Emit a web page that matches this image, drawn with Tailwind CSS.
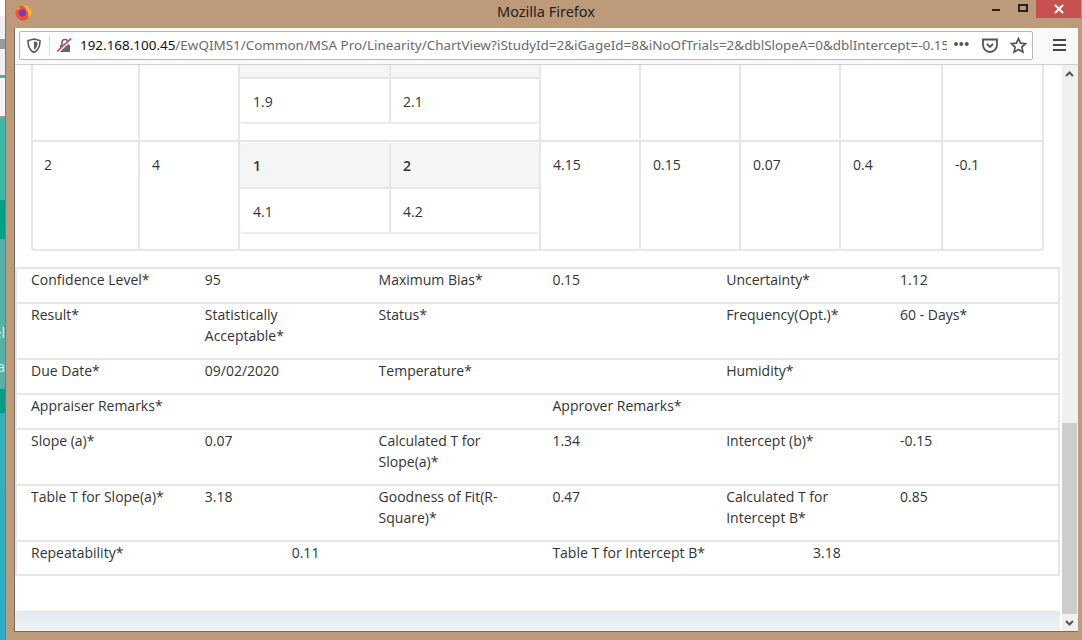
<!DOCTYPE html>
<html lang="en">
<head>
  <meta charset="UTF-8" />
  <title>Mozilla Firefox</title>
  <script src="https://cdn.jsdelivr.net/npm/@tailwindcss/browser@4"></script>
</head>
<body class="w-[1082px] h-[640px] overflow-hidden flex bg-[#bd9a7a] font-['Open_Sans',sans-serif] text-[14px] text-[#333]">
  <!-- desktop peeking out on the left -->
  <div class="w-[5px] h-full flex flex-col shrink-0 overflow-hidden">
    <div class="h-[16px] bg-white"></div>
    <div class="h-[23px] bg-[#f0f0f0]"></div>
    <div class="h-[10px] bg-[#9a9a9a]"></div>
    <div class="h-[26px] bg-[#f0f0f0]"></div>
    <div class="h-[3px] bg-[#3cb8a8]"></div>
    <div class="h-[38px] bg-[#f4f4f4]"></div>
    <div class="h-[2px] bg-[#9a9a9a]"></div>
    <div class="h-[82px] bg-[#3cb8a8]"></div>
    <div class="h-[39px] bg-[#00a08a]"></div>
    <div class="h-[150px] bg-[#55b0ac] flex flex-col items-end text-[#d8f2f0] leading-[34px] pt-[77px] whitespace-nowrap">
      <span>el</span>
      <span>a</span>
    </div>
    <div class="h-[24px] bg-[#009e8a]"></div>
    <div class="h-[227px] bg-linear-to-b from-[#36b0b8] to-[#2aaec8]"></div>
  </div>

  <!-- window -->
  <div class="w-[1077px] h-full flex flex-col border-l border-[#8f7560]">
    <!-- title bar -->
    <div class="h-[28px] shrink-0 relative flex items-center justify-center text-[#222] text-[14.500px] font-['Noto_Sans',sans-serif]">
      <span class="ml-[4px] mt-[-5px]">Mozilla Firefox</span>
      <svg class="absolute left-[9px] top-[4px]" width="17" height="17" viewBox="0 0 17 17">
        <circle cx="8" cy="9" r="7.500" fill="#f2503c"/>
        <path d="M7 .8c5 .3 9.500 3 9.500 8 0 2.500-1.200 4.600-3 6 .8-5-2-10.500-6.500-14z" fill="#ffb42e"/>
        <path d="M1 6c1-2 2-3 3-3.500L5 5z" fill="#ff9a30"/>
        <circle cx="7.500" cy="9" r="3.600" fill="#6a3fc4"/>
      </svg>
      <div class="absolute right-[1px] top-0 flex items-start">
        <div class="w-[26px] h-[18px] relative"><div class="absolute left-[8px] top-[9px] w-[8px] h-[2px] bg-[#222]"></div></div>
        <div class="w-[26px] h-[18px] relative"><div class="absolute left-[8px] top-[4px] w-[10px] h-[8px] border-2 border-[#222]"></div></div>
        <div class="w-[45px] h-[18px] bg-[#c75050] flex items-center justify-center">
          <svg width="10" height="10" viewBox="0 0 10 10"><path d="M1 1l8 8M9 1l-8 8" stroke="#fff" stroke-width="2"/></svg>
        </div>
      </div>
    </div>

    <div class="flex-1 flex flex-col ml-[8px] mr-[4px] mb-[8px] border-l border-b border-[#7a6a5c] overflow-hidden">
      <!-- toolbar -->
      <div class="h-[37px] shrink-0 bg-[#f9f9fa] border-b border-[#cfcfcf] flex items-center pl-[4px] pb-[2px]">
        <div class="w-[1014px] h-[29px] bg-white border border-[#b8b8b8] rounded-[2px] flex items-center text-[#6b6b6b]">
          <svg class="ml-[7px]" width="14" height="15" viewBox="0 0 14 15"><path d="M7 1l6 1.500c0 6-1.500 10-6 12-4.500-2-6-6-6-12z" fill="none" stroke="#5a5a5a" stroke-width="1.600"/><path d="M7 3.500l3.500.8c0 3.500-1 6-3.500 7.500z" fill="#5a5a5a"/></svg>
          <div class="w-px h-[19px] bg-[#dcdcdc] ml-[8px]"></div>
          <svg class="ml-[7px]" width="15" height="15" viewBox="0 0 15 15"><path d="M3 7h10v7H3z" fill="#666"/><path d="M5 7V4.500a3 3 0 0 1 6 0V7" fill="none" stroke="#666" stroke-width="1.600"/><path d="M0 14.500L14 1.500" stroke="#fff" stroke-width="3"/><path d="M0 13.500L14 .5" stroke="#ed2655" stroke-width="1.500"/></svg>
          <div class="ml-[8px] mt-px w-[867px] overflow-hidden whitespace-nowrap text-[13.450px] font-['Noto_Sans',sans-serif]"><span class="text-[#111]">192.168.100.45</span>/EwQIMS1/Common/MSA Pro/Linearity/ChartView?iStudyId=2&amp;iGageId=8&amp;iNoOfTrials=2&amp;dblSlopeA=0&amp;dblIntercept=-0.15</div>
          <span class="ml-[6px] w-[17px] text-center text-[#555] text-[13px] font-bold tracking-[0.5px] whitespace-nowrap">•••</span>
          <svg class="ml-[12px]" width="16" height="15" viewBox="0 0 16 15"><path d="M1 1.500h14v5.500a7 7 0 0 1-14 0z" fill="none" stroke="#555" stroke-width="1.800"/><path d="M5 6l3 3 3-3" fill="none" stroke="#555" stroke-width="1.800"/></svg>
          <svg class="ml-[12px]" width="17" height="17" viewBox="0 0 17 17"><path d="M8.500 1.500l2.100 4.600 5 .6-3.700 3.400 1 5-4.400-2.500-4.400 2.500 1-5L1.400 6.700l5-.6z" fill="none" stroke="#555" stroke-width="1.700"/></svg>
        </div>
        <div class="ml-[20px] w-[13px] flex flex-col gap-[3px]">
          <div class="h-[2px] bg-[#444]"></div><div class="h-[2px] bg-[#444]"></div><div class="h-[2px] bg-[#444]"></div>
        </div>
      </div>

      <!-- page + scrollbar -->
      <div class="flex-1 flex bg-white min-h-0">
        <div class="w-[1047px] flex flex-col">
          <!-- trials table -->
          <div class="ml-[16px] w-[1013px] h-[186px] shrink-0 border-x-2 border-b-2 border-[#e6e6e6] rounded-b-[4px] flex">
            <div class="w-[107px] flex flex-col border-r-2 border-[#e6e6e6]">
              <div class="h-[77px] border-b-2 border-[#e6e6e6]"></div>
              <div class="pl-[11px] pt-[12px]">2</div>
            </div>
            <div class="w-[100px] flex flex-col border-r-2 border-[#e6e6e6]">
              <div class="h-[77px] border-b-2 border-[#e6e6e6]"></div>
              <div class="pl-[12px] pt-[12px]">4</div>
            </div>
            <div class="w-[301px] flex flex-col border-r-2 border-[#e6e6e6]">
              <div class="h-[77px] border-b-2 border-[#e6e6e6]">
                <div class="h-[14px] bg-[#f5f5f5] border-b-2 border-[#e6e6e6] flex"><div class="w-[151px] border-r-2 border-[#e6e6e6]"></div></div>
                <div class="h-[45px] border-b-2 border-[#ececec] rounded-b-[4px] flex items-center">
                  <div class="w-[151px] h-full border-r-2 border-[#e6e6e6] pl-[13px] pt-px flex items-center">1.9</div>
                  <div class="pl-[12px] pt-px">2.1</div>
                </div>
              </div>
              <div class="h-[46px] mt-px bg-[#f5f5f5] border-b-2 border-[#e6e6e6] rounded-t-[4px] font-semibold flex items-center">
                <div class="w-[151px] h-full border-r-2 border-[#e6e6e6] pl-[13px] flex items-center">1</div>
                <div class="pl-[12px]">2</div>
              </div>
              <div class="h-[45px] border-b-2 border-[#ececec] rounded-b-[4px] flex items-center">
                <div class="w-[151px] h-full border-r-2 border-[#e6e6e6] pl-[13px] pt-px flex items-center">4.1</div>
                <div class="pl-[12px] pt-px">4.2</div>
              </div>
            </div>
            <div class="w-[100px] flex flex-col border-r-2 border-[#e6e6e6]">
              <div class="h-[77px] border-b-2 border-[#e6e6e6]"></div>
              <div class="pl-[12px] pt-[12px]">4.15</div>
            </div>
            <div class="w-[100px] flex flex-col border-r-2 border-[#e6e6e6]">
              <div class="h-[77px] border-b-2 border-[#e6e6e6]"></div>
              <div class="pl-[12px] pt-[12px]">0.15</div>
            </div>
            <div class="w-[100px] flex flex-col border-r-2 border-[#e6e6e6]">
              <div class="h-[77px] border-b-2 border-[#e6e6e6]"></div>
              <div class="pl-[12px] pt-[12px]">0.07</div>
            </div>
            <div class="w-[102px] flex flex-col border-r-2 border-[#e6e6e6]">
              <div class="h-[77px] border-b-2 border-[#e6e6e6]"></div>
              <div class="pl-[12px] pt-[12px]">0.4</div>
            </div>
            <div class="flex-1 flex flex-col">
              <div class="h-[77px] border-b-2 border-[#e6e6e6]"></div>
              <div class="pl-[12px] pt-[12px]">-0.1</div>
            </div>
          </div>

          <!-- summary table -->
          <div class="mt-[16px] w-[1045px] border-x-2 border-b-2 border-[#e6e6e6] leading-[21px]">
            <div class="h-[35px] border-t-2 border-[#e6e6e6] grid grid-cols-[173.800px_173.800px_173.800px_173.800px_173.800px_1fr] pl-[14px] *:pr-[20px]">
              <div>Confidence Level*</div><div>95</div><div>Maximum Bias*</div><div>0.15</div><div>Uncertainty*</div><div>1.12</div>
            </div>
            <div class="h-[56px] border-t-2 border-[#e6e6e6] grid grid-cols-[173.800px_173.800px_173.800px_173.800px_173.800px_1fr] pl-[14px] *:pr-[20px]">
              <div>Result*</div><div>Statistically Acceptable*</div><div>Status*</div><div></div><div>Frequency(Opt.)*</div><div>60 - Days*</div>
            </div>
            <div class="h-[35px] border-t-2 border-[#e6e6e6] grid grid-cols-[173.800px_173.800px_173.800px_173.800px_173.800px_1fr] pl-[14px] *:pr-[20px]">
              <div>Due Date*</div><div>09/02/2020</div><div>Temperature*</div><div></div><div>Humidity*</div><div></div>
            </div>
            <div class="h-[35px] border-t-2 border-[#e6e6e6] grid grid-cols-[521.500px_1fr] pl-[14px]">
              <div>Appraiser Remarks*</div><div>Approver Remarks*</div>
            </div>
            <div class="h-[56px] border-t-2 border-[#e6e6e6] grid grid-cols-[173.800px_173.800px_173.800px_173.800px_173.800px_1fr] pl-[14px] *:pr-[20px]">
              <div>Slope (a)*</div><div>0.07</div><div>Calculated T for Slope(a)*</div><div>1.34</div><div>Intercept (b)*</div><div>-0.15</div>
            </div>
            <div class="h-[56px] border-t-2 border-[#e6e6e6] grid grid-cols-[173.800px_173.800px_173.800px_173.800px_173.800px_1fr] pl-[14px] *:pr-[20px]">
              <div>Table T for Slope(a)*</div><div>3.18</div><div>Goodness of Fit(R-Square)*</div><div>0.47</div><div>Calculated T for Intercept B*</div><div>0.85</div>
            </div>
            <div class="h-[34px] border-t-2 border-[#e6e6e6] grid grid-cols-[260.700px_260.700px_260.700px_1fr] pl-[14px]">
              <div>Repeatability*</div><div>0.11</div><div>Table T for Intercept B*</div><div>3.18</div>
            </div>
          </div>

          <div class="flex-1"></div>
          <div class="h-[20px] w-[1045px] bg-linear-to-b from-[#e3eaed] to-[#eef3f6]"></div>
        </div>
        <!-- scrollbar -->
        <div class="w-[16px] bg-[#f0f0f0] flex flex-col">
          <div class="h-[17px] flex items-center justify-center pr-px">
            <svg width="9" height="6" viewBox="0 0 9 6"><path d="M1 5l3.500-3.500L8 5" fill="none" stroke="#555" stroke-width="2"/></svg>
          </div>
          <div class="h-[341px]"></div>
          <div class="flex-1 w-[15px] bg-[#cdcdcd]"></div>
          <div class="h-[17px] flex items-center justify-center pr-px">
            <svg width="9" height="6" viewBox="0 0 9 6"><path d="M1 1l3.500 3.500L8 1" fill="none" stroke="#555" stroke-width="2"/></svg>
          </div>
        </div>
      </div>
    </div>
  </div>
</body>
</html>
